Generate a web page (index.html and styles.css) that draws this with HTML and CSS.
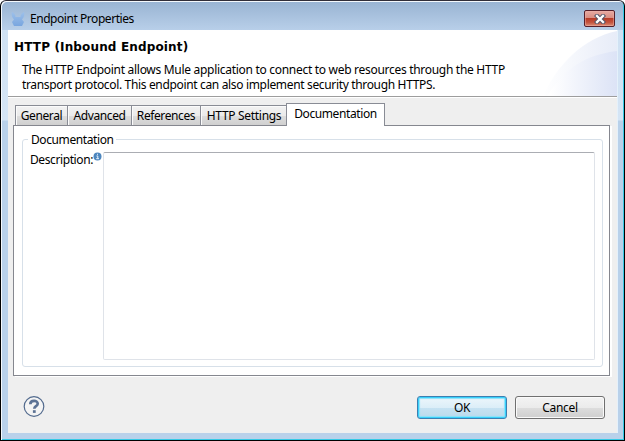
FILE: index.html
```
<!DOCTYPE html>
<html lang="en">
<head>
<meta charset="utf-8">
<title>Endpoint Properties</title>
<link rel="stylesheet" href="styles.css">
</head>
<body>
<div class="window">
  <div class="titlebar">
    <svg class="app-icon" width="14" height="16" viewBox="0 0 14 16"><defs><linearGradient id="mule" x2="0" y2="1"><stop offset="0" stop-color="#9dc0ea"/><stop offset="1" stop-color="#79a6df"/></linearGradient></defs><path fill="url(#mule)" d="M1 1C3.500 2 4.500 4 4.500 6H9.500C9.500 4 10.500 2 13 1C14 4 12.500 7 11 8.500L13 11L11 15H3L1 11L3 8.500C1.500 7 0 4 1 1Z"/></svg>
    <span class="caption">Endpoint Properties</span>
    <span class="close"><svg width="12" height="10" viewBox="0 0 12 10"><path d="M3 2L9 8M9 2L3 8" stroke="#555669" stroke-width="4.400" stroke-linecap="square"/><path d="M3 2L9 8M9 2L3 8" stroke="#fff" stroke-width="2.300" stroke-linecap="square"/></svg></span>
  </div>
  <div class="client">
    <div class="header">
      <svg class="swoosh" width="80" height="66" viewBox="0 0 80 66"><defs><linearGradient id="s1"><stop offset="0" stop-color="#fff"/><stop offset="1" stop-color="#e7ecf8"/></linearGradient><linearGradient id="s2"><stop offset="0.050" stop-color="#fff"/><stop offset="1" stop-color="#dce3f6"/></linearGradient></defs><path fill="url(#s1)" d="M6 66C20 35 46 8 80 1V66Z"/><path fill="url(#s2)" d="M10 66C28 38 48 25 80 21V66Z"/></svg>
      <h1>HTTP (Inbound Endpoint)</h1>
      <p><span class="line1">The HTTP Endpoint allows Mule application to connect to web resources through the HTTP</span><span class="line2">transport protocol. This endpoint can also implement security through HTTPS.</span></p>
    </div>
    <div class="tabs">
      <div class="tab general"><span>General</span></div>
      <div class="tab advanced"><span>Advanced</span></div>
      <div class="tab references"><span>References</span></div>
      <div class="tab settings"><span>HTTP Settings</span></div>
      <div class="tab active"><span>Documentation</span></div>
    </div>
    <div class="panel">
      <div class="group">
        <div class="legend"><span>Documentation</span></div>
        <div class="field">
          <label for="description">Description:</label>
          <svg class="info" width="9" height="9" viewBox="0 0 9 9"><circle cx="4.500" cy="4.500" r="4" fill="#4d86be"/><path d="M3.500 4H4.800V6.500M3.200 6.700H6M4 2.300H5" fill="none" stroke="#e7f3fc"/></svg>
          <textarea id="description"></textarea>
        </div>
      </div>
    </div>
    <div class="footer">
      <svg class="help" width="22" height="22" viewBox="0 0 22 22"><circle cx="11" cy="10.500" r="9.800" fill="#f4f4f4" stroke="#536b8e" stroke-width="1.200"/><path d="M7.300 8.200C7.300 3.800 14.700 3.800 14.700 7.700C14.700 10.200 11.300 10.200 11.300 12.800" fill="none" stroke="#5c7294" stroke-width="2.700"/><path d="M9.900 14.200H12.700V16.900H9.900Z" fill="#5c7294"/></svg>
      <button class="ok"><span>OK</span></button>
      <button><span>Cancel</span></button>
    </div>
  </div>
</div>
</body>
</html>
```
FILE: styles.css
```
* { box-sizing: border-box; }
body { margin: 0; background: #fff; color: #000; font: 12px/15px "Noto Sans", "Open Sans", sans-serif; letter-spacing: -.4px; }
.window {
  width: 625px; height: 441px; padding: 1px 7px 7px;
  border: 1px solid #000; border-top-color: #302d38; border-radius: 6px 6px 0 0;
  background: linear-gradient(#98b3d2, #b8cfe9 29px, #cfe1f3 29px, #d5e5f5 119px, #b9d1ea 120px);
  box-shadow: inset 1px 1px #f4f8fc, inset -1px -1px #35c9e5;
}
.titlebar { height: 28px; display: flex; align-items: flex-start; padding: 8px 2px 0 3px; white-space: nowrap; }
.app-icon { margin-top: 1px; }
.caption { margin: 1px 0 0 5px; letter-spacing: -.45px; }
.close {
  width: 31px; height: 17px; margin-left: auto; display: flex; align-items: center; justify-content: center;
  border: 1px solid #54202b; border-radius: 2px;
  background: linear-gradient(#e7aaa2, #d88c81 48%, #b83c28 50%, #c3523d 75%, #dc8d75);
  box-shadow: inset 0 0 0 1px #eeb0a780;
}
.client { width: 609px; height: 403px; background: #efefef; box-shadow: 1px 0 #e5f1fb; }
.header { position: relative; height: 67px; padding: 9px 6px 0; background: #fff; border-bottom: 1px solid #9d9d9d; box-shadow: 0 1px #fff; }
.swoosh { position: absolute; right: 0; top: 0; }
h1 { position: relative; margin: 0; font: bold 12px/16px "DejaVu Sans", sans-serif; letter-spacing: .15px; white-space: nowrap; }
.header p { position: relative; margin: 7px 0 0 8px; white-space: nowrap; }
.header p span { display: block; }
.line1 { letter-spacing: -.295px; }
.line2 { letter-spacing: -.34px; }
.tabs { display: flex; align-items: flex-end; height: 28px; padding-left: 7px; }
.tab {
  height: 20px; display: flex; justify-content: center; padding-top: 2px;
  border: 1px solid #898c95; border-width: 1px 1px 0; white-space: nowrap;
  background: linear-gradient(#f2f2f2, #ebebeb 50%, #ddd 52%, #d0d0d0); box-shadow: inset 1px 1px #fbfbfb;
}
.tab + .tab { border-left: 0; }
.general { width: 53px; }
.advanced { width: 64px; }
.references { width: 69px; }
.settings { width: 85px; border-right: 0; padding-left: 1px; letter-spacing: -.3px; }
.tab.active { position: relative; width: 99px; height: 23px; margin-bottom: -1px; border-left: 1px solid #898c95; background: #fff; box-shadow: none; }
.panel { width: 597px; height: 251px; margin-left: 5px; padding: 13px 7px 0 8px; background: #fff; border: 1px solid #85878f; box-shadow: 2px 1px #fff; }
.group { width: 581px; height: 228px; border: 1px solid #d7e0e9; border-radius: 3px; }
.legend { display: flex; height: 12px; padding-left: 5px; }
.legend span { width: 88px; height: 15px; margin-top: -8px; padding-left: 3px; background: #fff; }
.field { display: flex; padding-left: 7px; }
label { width: 63px; white-space: nowrap; }
.info { margin-right: 1px; }
textarea { width: 492px; height: 208px; resize: none; border: 1px solid #dfe3e9; border-top-color: #abadb3; border-radius: 2px; background: #fff; outline: 0; }
.footer { display: flex; height: 57px; padding: 20px 12px 0 15px; }
button {
  width: 90px; height: 23px; padding: 0; margin-left: 8px; color: #000; font: inherit; letter-spacing: -.3px;
  border: 1px solid #707070; border-radius: 3px; background: linear-gradient(#f3f3f3, #ebebeb 50%, #ddd 51%, #cfcfcf); box-shadow: inset 0 0 0 1px #fafafa;
}
.ok { margin-left: auto; border-color: #3c7fb1; background: linear-gradient(#edf6fb, #dceef8 50%, #c6e2f2 51%, #bbdaeb); box-shadow: inset 0 0 0 1px #38d0fa, inset 0 0 1px 2px #8ae2fb; }
```
